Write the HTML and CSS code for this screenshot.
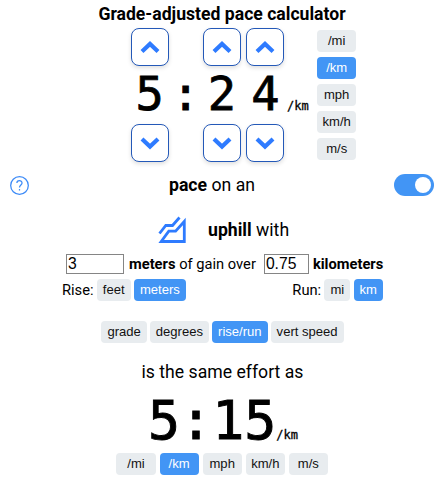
FILE: index.html
```html
<!DOCTYPE html>
<html lang="en">
<head>
<meta charset="utf-8">
<title>Grade-adjusted pace calculator</title>
<link rel="stylesheet" href="styles.css">
</head>
<body>
<h1>Grade-adjusted pace calculator</h1>
<section class="pace">
  <div class="digit">
    <button class="step"><svg viewBox="0 0 20 14"><path d="M2 11.5 L10 4 L18 11.5"/></svg></button>
    <span class="num">5</span>
    <button class="step"><svg viewBox="0 0 20 14"><path d="M2 3 L10 10.5 L18 3"/></svg></button>
  </div>
  <span class="num colon">:</span>
  <div class="digit">
    <button class="step"><svg viewBox="0 0 20 14"><path d="M2 11.5 L10 4 L18 11.5"/></svg></button>
    <span class="num">2</span>
    <button class="step"><svg viewBox="0 0 20 14"><path d="M2 3 L10 10.5 L18 3"/></svg></button>
  </div>
  <div class="digit">
    <button class="step"><svg viewBox="0 0 20 14"><path d="M2 11.5 L10 4 L18 11.5"/></svg></button>
    <span class="num">4</span>
    <button class="step"><svg viewBox="0 0 20 14"><path d="M2 3 L10 10.5 L18 3"/></svg></button>
  </div>
  <span class="unit">/km</span>
  <div class="units-col">
    <button class="btn">/mi</button>
    <button class="btn on">/km</button>
    <button class="btn">mph</button>
    <button class="btn">km/h</button>
    <button class="btn">m/s</button>
  </div>
</section>
<section class="on-row">
  <svg class="help" viewBox="0 0 20 20"><circle cx="10" cy="10" r="8.4"/><path d="M7.5 7.7 C7.5 4.5 12.4 4.6 12.4 7.5 C12.4 9.5 10 9.5 10 12"/><path d="M10 13.4 V14.8"/></svg>
  <p><b>pace</b> on an</p>
  <span class="toggle"></span>
</section>
<section class="hill-row">
  <svg class="hill" viewBox="0 0 28 28"><path d="M1.5 17.5 L7.8 9.5 H14.5 L21.5 1.5"/><path d="M3.2 25.5 H26.3 V5.5 L17.6 15.2 H10.8 Z"/></svg>
  <p><b>uphill</b> with</p>
</section>
<section class="gain-row">
  <input class="rise" value="3"><span class="gain"><b>meters</b> of gain over</span><input class="run" value="0.75"><b>kilometers</b>
</section>
<section class="unit-row">
  <span class="label">Rise:</span>
  <button class="btn">feet</button>
  <button class="btn on">meters</button>
  <span class="label push">Run:</span>
  <button class="btn">mi</button>
  <button class="btn on">km</button>
</section>
<section class="modes">
  <button class="btn">grade</button>
  <button class="btn">degrees</button>
  <button class="btn on">rise/run</button>
  <button class="btn">vert speed</button>
</section>
<p class="same">is the same effort as</p>
<section class="result"><span class="big">5:15</span><span class="unit">/km</span></section>
<section class="units">
  <button class="btn">/mi</button>
  <button class="btn on">/km</button>
  <button class="btn">mph</button>
  <button class="btn">km/h</button>
  <button class="btn">m/s</button>
</section>
</body>
</html>
```
FILE: styles.css
```css
* { box-sizing: border-box; }
body {
  margin: 0;
  height: 480px;
  overflow: hidden;
  background: #fff;
  color: #000;
  font: 17.65px/24px Roboto, sans-serif;
}
h1 { margin: 2px 2px 2px 0; font-size: 17.6px; line-height: 24px; font-weight: 700; text-align: center; }
p { margin: 0; }
button { font: inherit; margin: 0; }
.pace { display: flex; height: 134px; padding-left: 128px; }
.digit { width: 43.4px; display: flex; flex-direction: column; align-items: center; }
.step {
  width: 38px;
  height: 38px;
  padding: 0;
  border: 1px solid #2459b8;
  border-radius: 8px;
  background: #fff;
  box-shadow: 0 2px 4px rgba(0, 0, 0, .13);
  display: grid;
  place-items: center;
}
.step svg { width: 20px; height: 14px; fill: none; stroke: #2e7bff; stroke-width: 4.2; }
.num {
  height: 58px;
  font: 47px/56px "DejaVu Sans Mono", monospace;
  -webkit-text-stroke: .8px #000;
}
.colon { width: 28.9px; margin-top: 38px; }
.unit { font: 12px/16px "DejaVu Sans Mono", monospace; -webkit-text-stroke: .3px #000; }
.pace .unit { margin: 70px 0 0 0; width: 30px; }
.units-col { display: flex; flex-direction: column; gap: 5px; padding-top: 2px; }
.btn {
  height: 22px;
  padding: 0 6px;
  border: 0;
  border-radius: 4px;
  background: #e8ecef;
  color: #111;
  font: 13.07px/22px "Liberation Sans", sans-serif;
  white-space: nowrap;
}
.btn.on { background: #4295f5; color: #fff; }
.units-col .btn, .units .btn { width: 39.2px; padding: 0; }
.on-row {
  display: grid;
  grid-template-columns: 40px 1fr 40px;
  align-items: center;
  height: 24px;
  margin: 11px 12px 0 9px;
}
.on-row p { text-align: center; padding-right: 19px; }
.help { width: 21px; height: 21px; fill: none; stroke: #3d8bf7; stroke-width: 1.2; }
.toggle { width: 40px; height: 22px; border-radius: 11px; background: #4295f5; padding: 3px 3px 3px 21px; }
.toggle::after { content: ""; display: block; width: 16px; height: 16px; border-radius: 50%; background: #fff; }
.hill-row { display: flex; align-items: center; height: 28px; margin: 19px 0 0 158px; gap: 22px; }
.hill { width: 28px; height: 28px; fill: none; stroke: #2e7bff; stroke-width: 2.8; }
.gain-row { display: flex; align-items: center; height: 20px; margin: 10px 0 0 66px; font-size: 14.7px; white-space: nowrap; }
input { height: 20px; padding: 0 1px; border: 1px solid #858585; border-radius: 0; background: #fff; color: #000; font: 15.7px/18px "Liberation Sans", sans-serif; }
.rise { width: 58px; margin-right: 5px; }
.run { width: 45px; margin: 0 4px 0 8px; }
.unit-row { display: flex; align-items: center; gap: 3.3px; height: 22px; margin: 5px 63px 0 62px; font-size: 14.7px; }
.push { margin-left: auto; }
.modes { display: flex; justify-content: center; gap: 3px; height: 22px; margin: 20px 1px 0 0; }
.same { margin: 17px 1px 0 0; text-align: center; }
.result { display: flex; justify-content: center; height: 60px; margin-top: 9px; }
.big { font: 53.3px/57px "DejaVu Sans Mono", monospace; -webkit-text-stroke: .9px #000; }
.result .unit { margin-top: 34px; }
.units { display: flex; justify-content: center; gap: 3.9px; margin-right: 1.6px; }
```
